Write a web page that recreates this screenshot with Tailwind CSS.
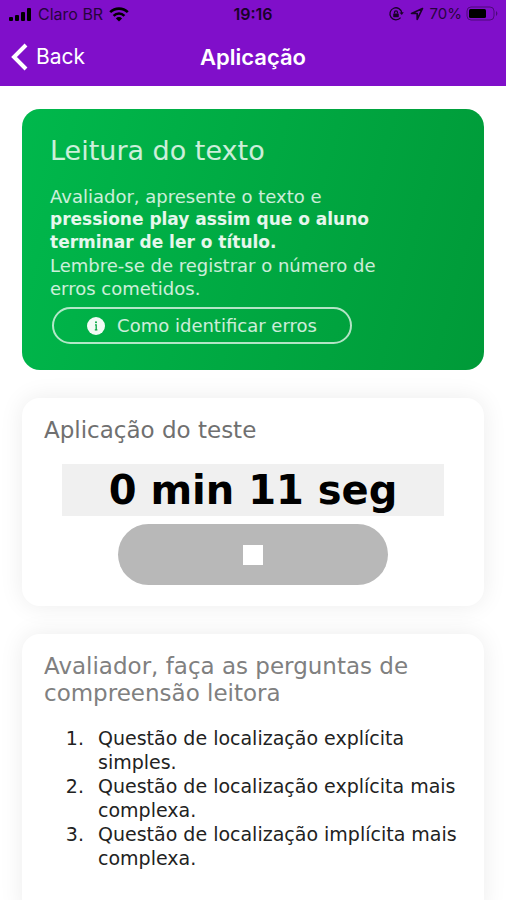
<!DOCTYPE html>
<html lang="pt-BR">
<head>
    <meta charset="UTF-8">
    <meta name="viewport" content="width=device-width, initial-scale=1.0">
    <title>Aplicação</title>
    <script src="https://cdn.jsdelivr.net/npm/@tailwindcss/browser@4"></script>
</head>
<body class="bg-white font-['DejaVu_Sans',sans-serif]">
    <div class="h-screen flex flex-col overflow-hidden">

        <!-- Header -->
        <header class="shrink-0 bg-[#800fca] font-[Inter,sans-serif]">
            <!-- Status bar -->
            <div class="grid grid-cols-3 items-center h-7 px-2 text-base text-black">
                <div class="flex items-center gap-1.5 whitespace-nowrap">
                    <svg class="w-6 h-4" viewBox="0 0 24 16" fill="currentColor">
                        <rect x="1" y="11" width="4" height="4" rx="1" />
                        <rect x="7" y="9" width="4" height="6" rx="1" />
                        <rect x="13" y="6" width="4" height="9" rx="1" />
                        <rect x="19" y="2" width="4" height="13" rx="1" />
                    </svg>
                    <span class="opacity-70">Claro BR</span>
                    <svg class="w-5 h-4" viewBox="0 0 20 16" fill="none" stroke="currentColor" stroke-width="2.6">
                        <path d="M1.2 6.2a12.5 12.5 0 0 1 17.6 0" />
                        <path d="M4.6 9.8a7.6 7.6 0 0 1 10.8 0" />
                        <path d="M10 15.6L6.9 12.4a4.4 4.4 0 0 1 6.2 0z" fill="currentColor" stroke="none" />
                    </svg>
                </div>
                <span class="text-center font-semibold opacity-80">19:16</span>
                <div class="flex items-center justify-end gap-1">
                    <svg class="w-4 h-4 opacity-80" viewBox="0 0 16 16" fill="none" stroke="currentColor" stroke-width="1.3">
                        <path d="M12.6 11.6a6 6 0 1 1 1.3-4.6" />
                        <path d="M11.4 6.4l2.4 2.6 2-2.8z" fill="currentColor" stroke="none" />
                        <rect x="5.2" y="7.4" width="5.6" height="3.8" rx="0.6" fill="currentColor" stroke="none" />
                        <path d="M6.5 7.6V6.4a1.5 1.5 0 0 1 3 0v1.2" />
                    </svg>
                    <svg class="w-[18px] h-3.5 opacity-80" viewBox="0 0 14 14" fill="none" stroke="currentColor" stroke-width="1.7" stroke-linejoin="round">
                        <path d="M12.5 1.5L1.5 6.5h5.7v5.8z" />
                    </svg>
                    <span class="text-[15px] opacity-70">70%</span>
                    <svg class="w-8 h-4" viewBox="0 0 32 16" fill="none">
                        <rect x="1" y="1" width="27" height="13" rx="4" stroke="currentColor" stroke-opacity="0.4" />
                        <rect x="3" y="3" width="17" height="9" rx="1.5" fill="currentColor" />
                        <path d="M30 5a3 3 0 0 1 0 5z" fill="currentColor" fill-opacity="0.4" />
                    </svg>
                </div>
            </div>

            <!-- Navigation -->
            <nav class="grid grid-cols-3 items-center h-[58px] px-2.5 text-white">
                <button type="button" class="flex items-center gap-2 text-[21px]">
                    <svg class="w-[18px] h-7" viewBox="0 0 18 28" fill="none" stroke="currentColor" stroke-width="4">
                        <path d="M16 2L4 14l12 12" />
                    </svg>
                    Back
                </button>
                <h1 class="text-center text-[22px] font-semibold">Aplicação</h1>
            </nav>
        </header>

        <main class="px-[22px] pt-[23px] flex flex-col gap-7">
            <!-- Reading card -->
            <section class="rounded-[18px] bg-linear-[105deg,#00b84c,#009a38] px-7 pt-6 pb-[26px] text-lg leading-[23px] text-white/80">
                <h2 class="text-[27px] leading-9">Leitura do texto</h2>
                <div class="pt-4">
                    <p>Avaliador, apresente o texto e</p>
                    <p class="text-[17px] leading-[23px] font-bold text-white/90">
                        pressione play assim que o aluno<br>
                        terminar de ler o título.
                    </p>
                    <p>Lembre-se de registrar o número de<br>erros cometidos.</p>
                </div>
                <button type="button" class="mt-[7px] ml-0.5 flex items-center justify-center gap-3 w-[300px] h-[37px] rounded-full border-2 border-white/70">
                    <svg class="w-[18px] h-[18px]" viewBox="0 0 18 18">
                        <circle cx="9" cy="9" r="9" fill="#ffffff" fill-opacity="0.95" />
                        <path d="M8 7.8H9.2V12.8M7.8 12.8h2.6" fill="none" stroke="#07a844" stroke-width="1.3" />
                        <circle cx="9" cy="5.2" r="1" fill="#07a844" />
                    </svg>
                    Como identificar erros
                </button>
            </section>

            <!-- Timer card -->
            <section class="rounded-[18px] bg-white px-[22px] pt-[18px] pb-[21px] shadow-[0_0_24px_rgba(0,0,0,0.08)]">
                <h2 class="text-[23px] leading-7 text-[#707070]">Aplicação do teste</h2>
                <p class="mt-5 mx-[18px] bg-[#f0f0f0] text-center text-[40px] leading-[52px] font-bold text-black">0 min 11 seg</p>
                <button type="button" aria-label="Parar" class="mt-2 mx-auto flex items-center justify-center w-[270px] h-[61px] rounded-full bg-[#b8b8b8]">
                    <span class="w-5 h-5 bg-white"></span>
                </button>
            </section>

            <!-- Questions card -->
            <section class="rounded-[18px] bg-white px-[22px] pt-[19px] pb-12 shadow-[0_0_24px_rgba(0,0,0,0.08)]">
                <h2 class="text-[23px] leading-[27px] text-[#808080]">Avaliador, faça as perguntas de compreensão leitora</h2>
                <ol class="mt-[19px] pl-[46px] list-decimal text-[19px] leading-6 text-[#222222]">
                    <li class="pl-2">Questão de localização explícita simples.</li>
                    <li class="pl-2">Questão de localização explícita mais complexa.</li>
                    <li class="pl-2">Questão de localização implícita mais complexa.</li>
                </ol>
            </section>
        </main>
    </div>
</body>
</html>
